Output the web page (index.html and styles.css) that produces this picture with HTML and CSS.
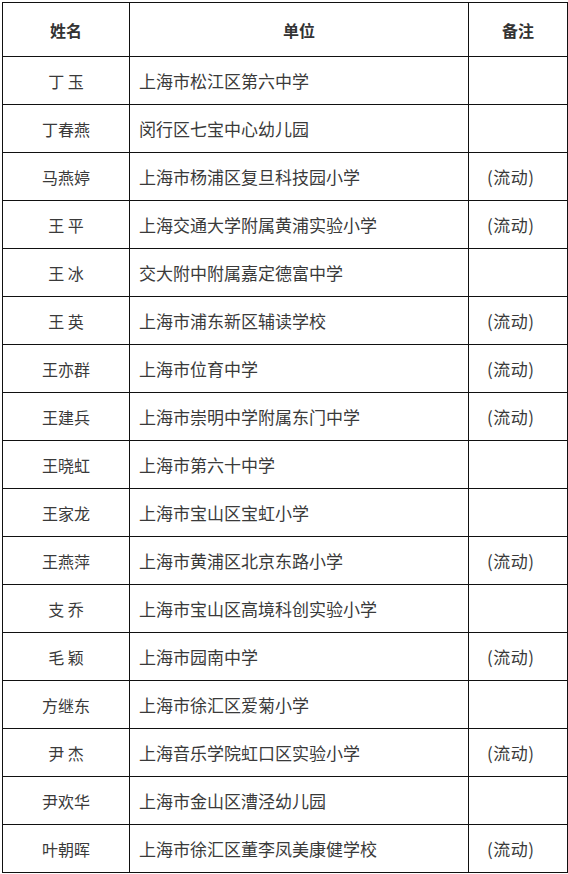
FILE: index.html
```html
<!DOCTYPE html>
<html lang="zh-CN">
<head>
<meta charset="utf-8">
<link rel="stylesheet" href="styles.css">
</head>
<body>
<table class="roster">
<colgroup><col class="c-name"><col class="c-unit"><col class="c-note"></colgroup>
<thead>
<tr><th>姓名</th><th>单位</th><th>备注</th></tr>
</thead>
<tbody>
<tr><td class="name">丁 玉</td><td class="unit">上海市松江区第六中学</td><td class="note"></td></tr>
<tr><td class="name">丁春燕</td><td class="unit">闵行区七宝中心幼儿园</td><td class="note"></td></tr>
<tr><td class="name">马燕婷</td><td class="unit">上海市杨浦区复旦科技园小学</td><td class="note">(流动)</td></tr>
<tr><td class="name">王 平</td><td class="unit">上海交通大学附属黄浦实验小学</td><td class="note">(流动)</td></tr>
<tr><td class="name">王 冰</td><td class="unit">交大附中附属嘉定德富中学</td><td class="note"></td></tr>
<tr><td class="name">王 英</td><td class="unit">上海市浦东新区辅读学校</td><td class="note">(流动)</td></tr>
<tr><td class="name">王亦群</td><td class="unit">上海市位育中学</td><td class="note">(流动)</td></tr>
<tr><td class="name">王建兵</td><td class="unit">上海市崇明中学附属东门中学</td><td class="note">(流动)</td></tr>
<tr><td class="name">王晓虹</td><td class="unit">上海市第六十中学</td><td class="note"></td></tr>
<tr><td class="name">王家龙</td><td class="unit">上海市宝山区宝虹小学</td><td class="note"></td></tr>
<tr><td class="name">王燕萍</td><td class="unit">上海市黄浦区北京东路小学</td><td class="note">(流动)</td></tr>
<tr><td class="name">支 乔</td><td class="unit">上海市宝山区高境科创实验小学</td><td class="note"></td></tr>
<tr><td class="name">毛 颖</td><td class="unit">上海市园南中学</td><td class="note">(流动)</td></tr>
<tr><td class="name">方继东</td><td class="unit">上海市徐汇区爱菊小学</td><td class="note"></td></tr>
<tr><td class="name">尹 杰</td><td class="unit">上海音乐学院虹口区实验小学</td><td class="note">(流动)</td></tr>
<tr><td class="name">尹欢华</td><td class="unit">上海市金山区漕泾幼儿园</td><td class="note"></td></tr>
<tr><td class="name">叶朝晖</td><td class="unit">上海市徐汇区董李凤美康健学校</td><td class="note">(流动)</td></tr>
</tbody>
</table>
</body>
</html>
```
FILE: styles.css
```css
html, body {
  margin: 0;
  padding: 0;
  background: #fff;
}
body {
  padding: 2px 0 0 2px;
  font-family: "Noto Sans CJK SC", "Noto Sans", sans-serif;
  font-size: 16px;
  color: #3a3a3a;
}
.roster {
  border-collapse: collapse;
  table-layout: fixed;
  width: 565px;
}
.c-name { width: 127px; }
.c-unit { width: 339px; }
.c-note { width: 99px; }
.roster th,
.roster td {
  border: 1px solid #111;
  padding: 0;
  line-height: 20px;
  vertical-align: middle;
}
.roster th {
  height: 53px;
  font-weight: bold;
  color: #333;
  text-align: center;
}
.roster td {
  height: 47px;
}
.name { text-align: center; }
.roster td.unit {
  text-align: left;
  padding-left: 9px;
  font-size: 17px;
}
.roster td.note {
  text-align: left;
  padding-left: 18px;
  font-size: 17px;
  letter-spacing: 0.5px;
}
```
